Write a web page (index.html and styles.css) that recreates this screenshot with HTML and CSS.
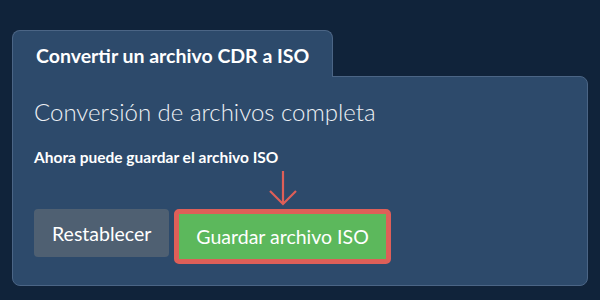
FILE: index.html
```html
<!DOCTYPE html>
<html lang="es">
<head>
    <meta charset="UTF-8">
    <meta name="viewport" content="width=device-width, initial-scale=1.0">
    <title>Convertir un archivo CDR a ISO</title>
    <link rel="stylesheet" href="styles.css">
</head>
<body>
    <div class="converter">
        <div class="tab">Convertir un archivo CDR a ISO</div>

        <div class="panel">
            <h2 class="status">Conversión de archivos completa</h2>
            <p class="hint">Ahora puede guardar el archivo ISO</p>

            <!-- Acciones -->
            <div class="actions">
                <button class="btn btn-reset">Restablecer</button>
                <div class="save-wrap">
                    <svg class="pointer" width="30" height="36" viewBox="0 0 30 36">
                        <path d="M15 1 V34 M2 21 L15 34 L28 21" fill="none" stroke="#de5f58" stroke-width="2.2"/>
                    </svg>
                    <button class="btn btn-save">Guardar archivo ISO</button>
                </div>
            </div>
        </div>
    </div>
</body>
</html>
```

FILE: styles.css
```css
    body {
        margin: 0;
        background-color: #10233a;
        font-family: 'Lato', 'Noto Sans', sans-serif;
        color: white;
    }


    .converter {
        padding: 30px 12px 0 12px;
    }


    .tab {
        display: inline-block;
        position: relative;
        z-index: 1;
        margin-bottom: -1px;
        padding: 14px 23px 10px 23px;
        background-color: #2d4a6b;
        border: 1px solid #4b6585;
        border-bottom: none;
        border-radius: 8px 8px 0 0;
        font-size: 19.5px;
        line-height: 22px;
        font-weight: bold;
    }


    .panel {
        box-sizing: border-box;
        height: 210px;
        padding: 21px 21px 0 21px;
        background-color: #2d4a6b;
        border: 1px solid #4b6585;
        border-radius: 0 8px 8px 8px;
    }


    .status {
        margin: 0;
        font-size: 24px;
        font-weight: 300;
        line-height: 1.2;
        color: #eef1f5;
    }


    .hint {
        margin: 21.5px 0 0 0;
        font-size: 15.5px;
        font-weight: bold;
    }


    .actions {
        display: flex;
        align-items: flex-start;
        gap: 5px;
        margin-top: 43px;
    }


    .btn {
        font-family: 'Lato', 'Noto Sans', sans-serif;
        font-size: 19.5px;
        color: white;
        border: none;
        border-radius: 4px;
        cursor: pointer;
    }


    .btn-reset {
        height: 48px;
        padding: 0 18px;
        background-color: #4f6072;
    }


    .save-wrap {
        position: relative;
    }


    .btn-save {
        height: 55px;
        padding: 0 17px;
        background-color: #5cb85c;
        border: 5px solid #de5f58;
        border-radius: 5px;
    }


    .pointer {
        position: absolute;
        left: 50%;
        bottom: 100%;
        margin-left: -15px;
        margin-bottom: 3px;
    }
```
